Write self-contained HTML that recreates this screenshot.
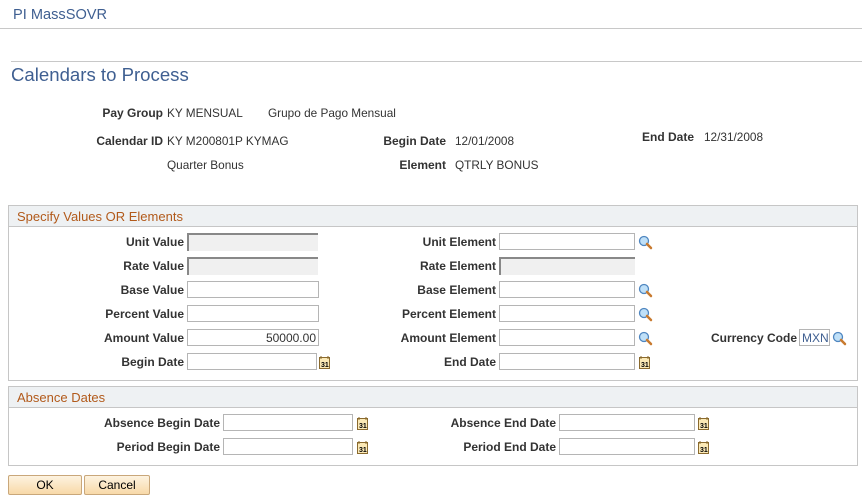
<!DOCTYPE html>
<html><head><style>
body{margin:0;width:862px;height:499px;position:relative;background:#fff;font-family:"Liberation Sans",Arial,sans-serif;font-size:12px;color:#333;overflow:hidden}
.a{position:absolute;white-space:nowrap}
.l{position:absolute;font-weight:bold;text-align:right;white-space:nowrap;color:#333}
.v{position:absolute;white-space:nowrap;color:#333;font-size:11.8px}
.in{position:absolute;height:17px;border:1px solid #b5b5b5;background:#fff;box-sizing:border-box}
.ro{position:absolute;height:18px;background:#f0f0f0;border-top:2px solid #888;border-left:2px solid #888;box-sizing:border-box}
.box{position:absolute;border:1px solid #c6c6c6;box-sizing:border-box}
.hd{position:absolute;left:0;right:0;top:0;height:21px;background:#eef1f3;border-bottom:1px solid #c6c6c6;color:#b25a1b;font-size:13px;padding:3px 0 0 8px;box-sizing:border-box}
.btn{position:absolute;height:20px;border:1px solid #c9a77a;border-radius:2px;background:linear-gradient(#fdf3e0,#f8d9a8);text-align:center;font-size:12px;line-height:18px;box-sizing:border-box;color:#000}
</style></head><body>
<svg width="0" height="0" style="position:absolute"><defs>
<g id="mg"><circle cx="6" cy="6" r="4.5" fill="#bfe0f8" stroke="#4f86c0" stroke-width="1.3"/><path d="M9 9 L13 13" stroke="#c87a2f" stroke-width="2.5" stroke-linecap="round"/></g>
<g id="cal"><rect x="1.5" y="2.5" width="10" height="11" fill="#fbe9b6" stroke="#8a6a2e"/><path d="M3 1v3M10 1v3" stroke="#8a6a2e"/><text x="3" y="12" font-size="7" font-weight="bold" font-family="Liberation Sans" fill="#000">31</text></g>
</defs></svg>
<div class="a" style="left:13px;top:7px;font-size:14.6px;color:#3f5f91">PI MassSOVR</div>
<div class="a" style="left:0;top:28px;width:862px;height:1px;background:#c8c8c8"></div>
<div class="a" style="left:11px;top:61px;width:851px;height:1px;background:#c8c8c8"></div>
<div class="a" style="left:11px;top:64px;font-size:18.6px;color:#3f5f91">Calendars to Process</div>

<div class="l" style="right:699px;top:106px">Pay Group</div><div class="v" style="left:167px;top:106px">KY MENSUAL</div><div class="v" style="left:268px;top:106px">Grupo de Pago Mensual</div>
<div class="l" style="right:699px;top:134px">Calendar ID</div><div class="v" style="left:167px;top:134px">KY M200801P KYMAG</div>
<div class="l" style="right:416px;top:134px">Begin Date</div><div class="v" style="left:455px;top:134px">12/01/2008</div>
<div class="l" style="right:168px;top:130px">End Date</div><div class="v" style="left:704px;top:130px">12/31/2008</div>
<div class="v" style="left:167px;top:158px">Quarter Bonus</div>
<div class="l" style="right:416px;top:158px">Element</div><div class="v" style="left:455px;top:158px">QTRLY BONUS</div>

<div class="box" style="left:8px;top:205px;width:850px;height:176px"><div class="hd">Specify Values OR Elements</div></div>
<div class="l" style="right:678px;top:235px">Unit Value</div><div class="ro" style="left:187px;top:233px;width:131px"></div>
<div class="l" style="right:678px;top:259px">Rate Value</div><div class="ro" style="left:187px;top:257px;width:131px"></div>
<div class="l" style="right:678px;top:283px">Base Value</div><div class="in" style="left:187px;top:281px;width:132px"></div>
<div class="l" style="right:678px;top:307px">Percent Value</div><div class="in" style="left:187px;top:305px;width:132px"></div>
<div class="l" style="right:678px;top:331px">Amount Value</div><div class="in" style="left:187px;top:329px;width:132px;text-align:right;padding:1px 2px 0 0">50000.00</div>
<div class="l" style="right:678px;top:355px">Begin Date</div><div class="in" style="left:187px;top:353px;width:130px"></div>
<svg class="a" style="left:318px;top:355px" width="14" height="15"><use href="#cal"/></svg>

<div class="l" style="right:366px;top:235px">Unit Element</div><div class="in" style="left:499px;top:233px;width:136px"></div>
<svg class="a" style="left:638px;top:235px" width="15" height="15"><use href="#mg"/></svg>
<div class="l" style="right:366px;top:259px">Rate Element</div><div class="ro" style="left:499px;top:257px;width:136px"></div>
<div class="l" style="right:366px;top:283px">Base Element</div><div class="in" style="left:499px;top:281px;width:136px"></div>
<svg class="a" style="left:638px;top:283px" width="15" height="15"><use href="#mg"/></svg>
<div class="l" style="right:366px;top:307px">Percent Element</div><div class="in" style="left:499px;top:305px;width:136px"></div>
<svg class="a" style="left:638px;top:307px" width="15" height="15"><use href="#mg"/></svg>
<div class="l" style="right:366px;top:331px">Amount Element</div><div class="in" style="left:499px;top:329px;width:136px"></div>
<svg class="a" style="left:638px;top:331px" width="15" height="15"><use href="#mg"/></svg>
<div class="l" style="right:366px;top:355px">End Date</div><div class="in" style="left:499px;top:353px;width:136px"></div>
<svg class="a" style="left:638px;top:355px" width="14" height="15"><use href="#cal"/></svg>
<div class="l" style="right:65px;top:331px">Currency Code</div><div class="in" style="left:799px;top:329px;width:31px;color:#3f5f91;padding:1px 0 0 2px">MXN</div>
<svg class="a" style="left:832px;top:331px" width="15" height="15"><use href="#mg"/></svg>

<div class="box" style="left:8px;top:386px;width:850px;height:80px"><div class="hd">Absence Dates</div></div>
<div class="l" style="right:642px;top:416px">Absence Begin Date</div><div class="in" style="left:223px;top:414px;width:130px"></div>
<svg class="a" style="left:356px;top:416px" width="14" height="15"><use href="#cal"/></svg>
<div class="l" style="right:642px;top:440px">Period Begin Date</div><div class="in" style="left:223px;top:438px;width:130px"></div>
<svg class="a" style="left:356px;top:440px" width="14" height="15"><use href="#cal"/></svg>
<div class="l" style="right:306px;top:416px">Absence End Date</div><div class="in" style="left:559px;top:414px;width:136px"></div>
<svg class="a" style="left:697px;top:416px" width="14" height="15"><use href="#cal"/></svg>
<div class="l" style="right:306px;top:440px">Period End Date</div><div class="in" style="left:559px;top:438px;width:136px"></div>
<svg class="a" style="left:697px;top:440px" width="14" height="15"><use href="#cal"/></svg>

<div class="btn" style="left:8px;top:475px;width:74px">OK</div>
<div class="btn" style="left:84px;top:475px;width:66px">Cancel</div>
</body></html>
